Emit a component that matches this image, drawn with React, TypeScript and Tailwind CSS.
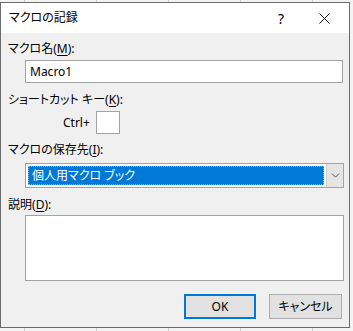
import { ChevronDown } from 'lucide-react'

const font = "font-['Noto_Sans','Noto_Sans_CJK_JP',sans-serif] [font-feature-settings:'palt']"

function Label({ text, mnemonic }: { text: string; mnemonic: string }) {
	return (
		<div className="h-4 pl-[7px] text-[12px] leading-4 text-[#000]">
			{text}(<span className="underline underline-offset-2">{mnemonic}</span>):
		</div>
	)
}

export default function App() {
	return (
		<div
			className={`${font} h-[331px] w-[353px] overflow-hidden bg-[#f3f3f3] bg-[linear-gradient(90deg,#cfcfcf_1px,transparent_1px)] bg-[length:72px_100%] bg-[position:24px_0] pt-[2px]`}
		>
			<div className="flex h-[326px] w-[350px] flex-col border border-[#6b6b6b] bg-[#f0f0f0]">
				{/* title bar */}
				<div className="flex h-[30px] items-center bg-white">
					<span className="pl-[8px] text-[12px] text-black">マクロの記録</span>
					<span className="ml-auto mr-[35px] text-[14px] text-black">?</span>
					<svg width="11" height="11" viewBox="0 0 11 11" className="mr-[19px]">
						<path d="M0.5 0.5L10.5 10.5M10.5 0.5L0.5 10.5" stroke="#111" strokeWidth="1" />
					</svg>
				</div>

				<div className="flex flex-1 flex-col pt-[8px]">
					<Label text="マクロ名" mnemonic="M" />
					<div className="mt-[3px] ml-[24px] flex h-[23px] w-[318px] items-center border border-[#a3a3a3] bg-white pl-[4px] text-[12px] text-black">
						Macro1
					</div>

					<div className="mt-[9px]">
						<Label text="ショートカット キー" mnemonic="K" />
					</div>
					<div className="mt-[3px] flex h-[23px] items-center">
						<span className="ml-[62px] text-[12px] text-black">Ctrl+</span>
						<div className="ml-[6px] h-[23px] w-[24px] border border-[#a3a3a3] bg-white" />
					</div>

					<div className="mt-[8px]">
						<Label text="マクロの保存先" mnemonic="I" />
					</div>
					<div className="mt-[5px] ml-[24px] flex h-[25px] w-[319px] border border-[#a3a3a3] bg-white">
						<div className="flex flex-1 p-[2px]">
							<div className="flex flex-1 items-center border border-dotted border-[#7fb4e4] bg-[#0078d7] pl-[3px] text-[12px] text-white">
								個人用マクロ ブック
							</div>
						</div>
						<div className="flex w-[17px] items-center justify-center border-l border-[#cfcfcf] bg-[#e5e5e5]">
							<ChevronDown size={13} strokeWidth={1.5} color="#333" />
						</div>
					</div>

					<div className="mt-[9px]">
						<Label text="説明" mnemonic="D" />
					</div>
					<div className="mt-[2px] ml-[24px] h-[66px] w-[319px] border border-[#a3a3a3] bg-white" />

					<div className="mt-[13px] flex h-[25px] justify-end pr-[7px]">
						<button className="flex h-[25px] w-[72px] items-center justify-center border-2 border-[#0078d7] bg-[#e1e1e1] text-[12px] text-black">
							OK
						</button>
						<button className="ml-[13px] flex h-[25px] w-[73px] items-center justify-center border border-[#adadad] bg-[#e1e1e1] text-[12px] text-black">
							キャンセル
						</button>
					</div>
				</div>
			</div>
		</div>
	)
}
